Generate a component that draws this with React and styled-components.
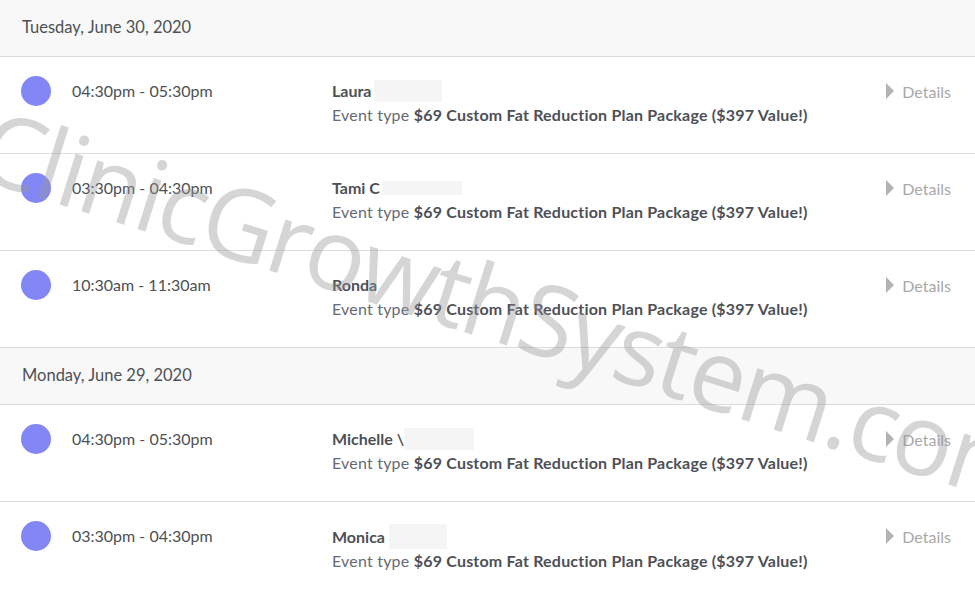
import styled, { createGlobalStyle } from 'styled-components';

const GlobalStyle = createGlobalStyle`
  html, body {
    margin: 0;
    padding: 0;
    background: #fff;
  }
  body {
    font-family: Lato, "Open Sans", sans-serif;
    color: #4d5055;
  }
`;

const Page = styled.div`
  position: relative;
  width: 975px;
  height: 597px;
  overflow: hidden;
  background: #fff;
`;

const DayHeader = styled.div`
  height: 57px;
  box-sizing: border-box;
  display: flex;
  align-items: center;
  padding: 0 22px 2px;
  background: #f8f8f8;
  border-bottom: 1px solid #dcdcdc;
  font-size: 16.5px;
  color: #4d5055;
`;

const Row = styled.div`
  height: 97px;
  box-sizing: border-box;
  display: grid;
  grid-template-columns: 30px 281px 1fr auto;
  padding: 19px 24px 0 21px;
  border-bottom: 1px solid #dcdcdc;
  background: #fff;
`;

const Dot = styled.span`
  width: 30px;
  height: 30px;
  border-radius: 50%;
  background: #8387f6;
`;

const Time = styled.div`
  padding-left: 21px;
  font-size: 16px;
  line-height: 30px;
  color: #4d5055;
`;

const Info = styled.div`
  display: flex;
  flex-direction: column;
  padding-top: 3px;
`;

const Name = styled.div`
  display: flex;
  align-items: center;
  font-size: 16px;
  font-weight: 700;
  line-height: 24px;
  color: #4d5055;
`;

const Redact = styled.span`
  display: inline-block;
  width: ${(p) => p.$w}px;
  height: ${(p) => p.$h}px;
  margin-left: ${(p) => p.$gap}px;
  background: #f5f5f5;
`;

const EventLine = styled.div`
  font-size: 16px;
  line-height: 24px;
  letter-spacing: 0.2px;
  color: #666a73;
  b {
    font-weight: 700;
    color: #4d5055;
  }
`;

const Details = styled.div`
  display: flex;
  align-items: center;
  gap: 8px;
  height: 30px;
  font-size: 16px;
  color: #a8a8a8;
`;

const Caret = styled.span`
  width: 0;
  height: 0;
  border-top: 8px solid transparent;
  border-bottom: 8px solid transparent;
  border-left: 8px solid #b3b3b3;
`;

const Watermark = styled.div`
  position: absolute;
  left: -1px;
  top: 92px;
  transform-origin: 0 0;
  transform: rotate(17.5deg);
  font-family: "Open Sans", sans-serif;
  font-size: 100px;
  letter-spacing: -2.5px;
  white-space: nowrap;
  color: rgba(150, 150, 150, 0.4);
  pointer-events: none;
  line-height: 1;
`;

const days = [
  {
    label: 'Tuesday, June 30, 2020',
    events: [
      { time: '04:30pm - 05:30pm', name: 'Laura', redact: [68, 22, 3] },
      { time: '03:30pm - 04:30pm', name: 'Tami C', redact: [80, 14, 2] },
      { time: '10:30am - 11:30am', name: 'Ronda' },
    ],
  },
  {
    label: 'Monday, June 29, 2020',
    events: [
      { time: '04:30pm - 05:30pm', name: 'Michelle \\', redact: [70, 22, 0] },
      { time: '03:30pm - 04:30pm', name: 'Monica', redact: [58, 25, 4] },
    ],
  },
];

export default function App() {
  return (
    <Page>
      <GlobalStyle />
      {days.map((day) => (
        <div key={day.label}>
          <DayHeader>{day.label}</DayHeader>
          {day.events.map((ev) => (
            <Row key={day.label + ev.time}>
              <Dot />
              <Time>{ev.time}</Time>
              <Info>
                <Name>
                  {ev.name}
                  {ev.redact && (
                    <Redact $w={ev.redact[0]} $h={ev.redact[1]} $gap={ev.redact[2]} />
                  )}
                </Name>
                <EventLine>
                  Event type <b>$69 Custom Fat Reduction Plan Package ($397 Value!)</b>
                </EventLine>
              </Info>
              <Details>
                <Caret />
                Details
              </Details>
            </Row>
          ))}
        </div>
      ))}
      <Watermark>ClinicGrowthSystem.com</Watermark>
    </Page>
  );
}
